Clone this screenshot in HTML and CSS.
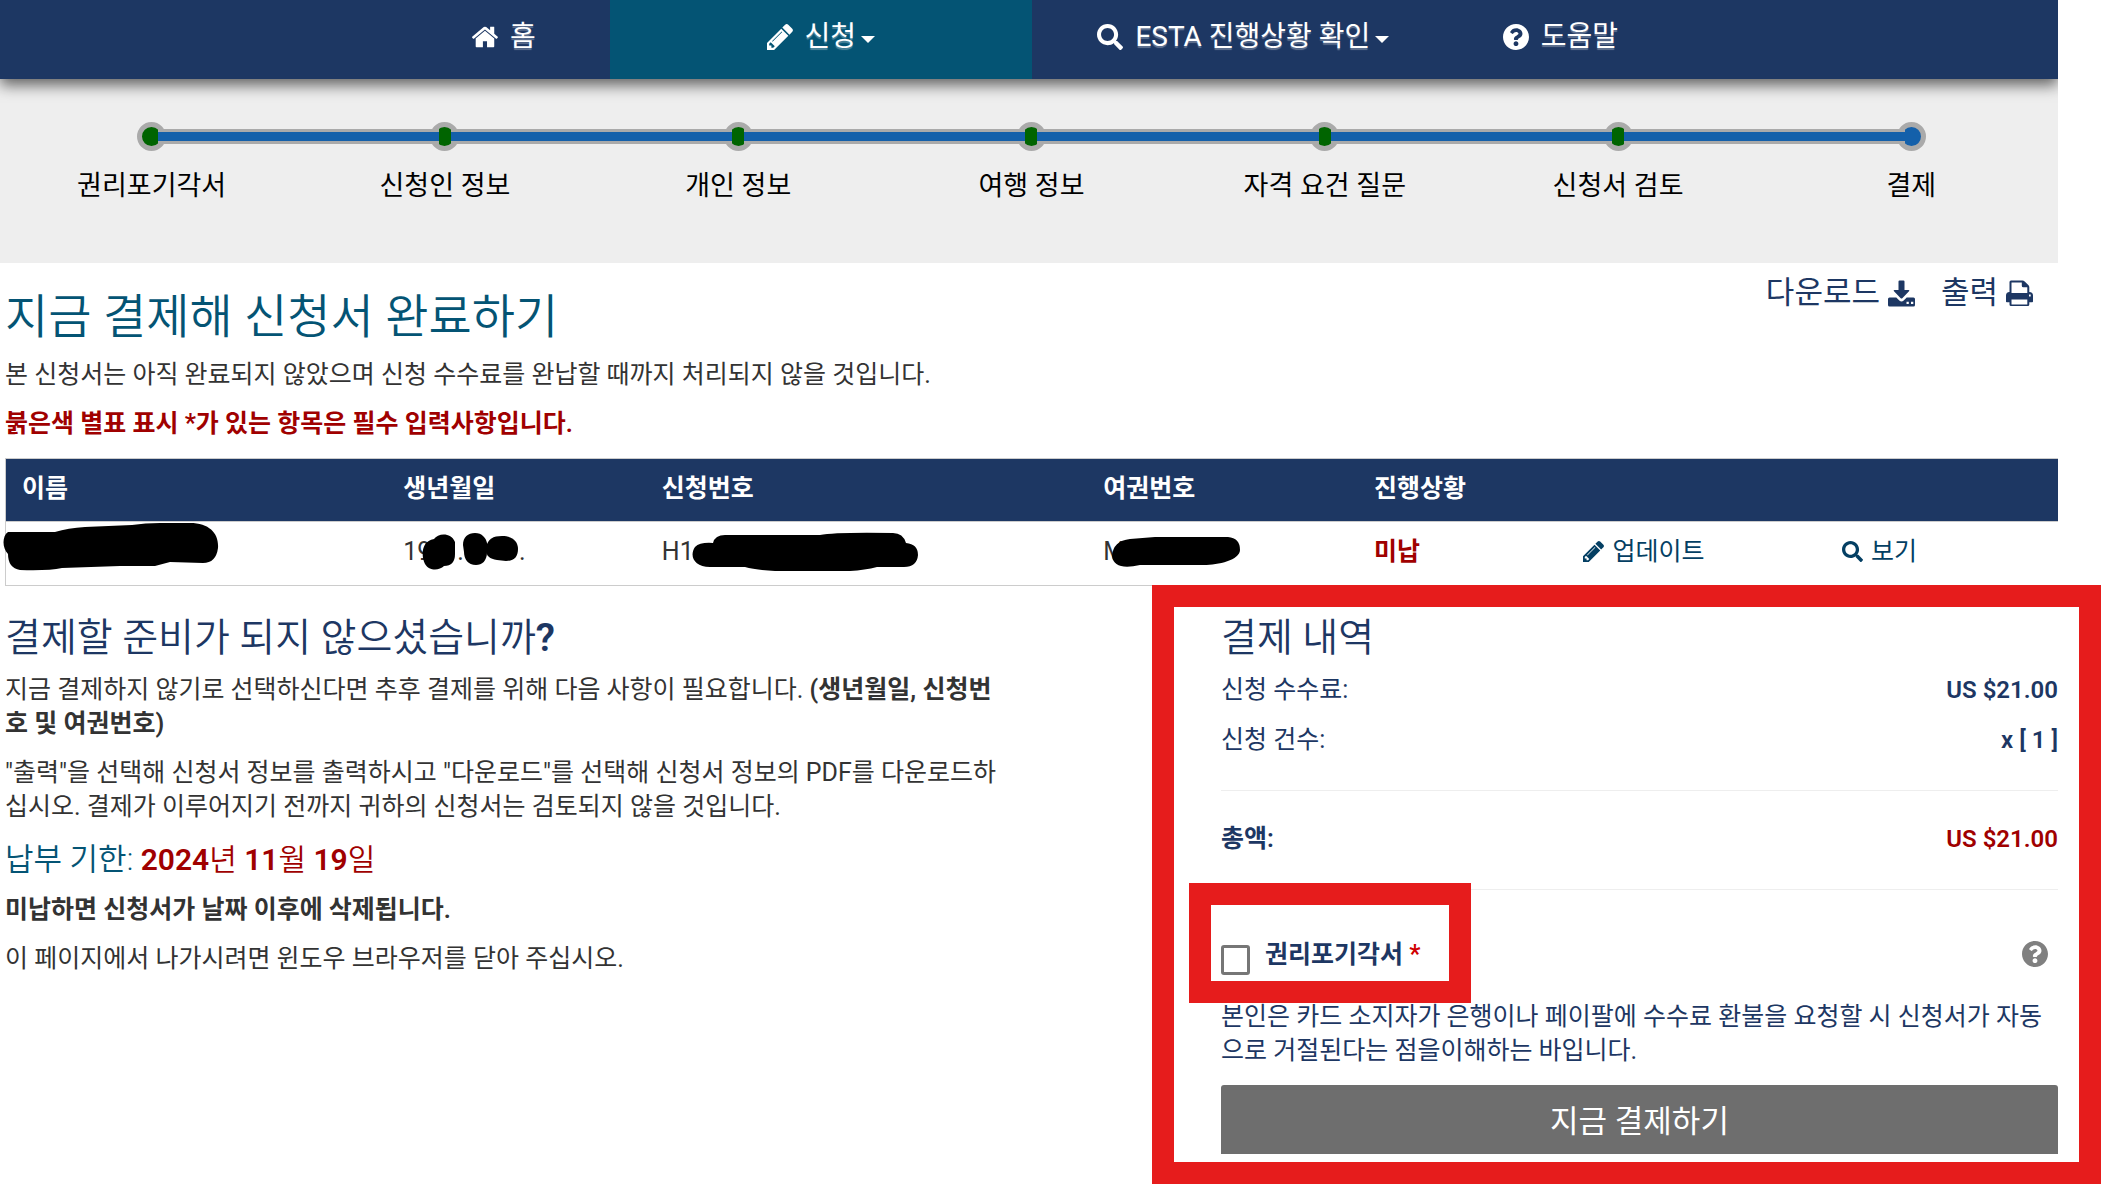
FILE: index.html
```html
<!DOCTYPE html>
<html lang="ko">
<head>
<meta charset="utf-8">
<title>ESTA - 결제</title>
<link rel="stylesheet" href="styles.css">
</head>
<body>
<svg class="sprite" aria-hidden="true">
  <symbol id="i-home" viewBox="90 250 1616 1290"><path d="M1472 992v480q0 26-19 45t-45 19h-384v-384h-256v384h-384q-26 0-45-19t-19-45v-480q0-1 .5-3t.5-3l575-474 575 474q1 2 1 6zm223-69l-62 74q-8 9-21 11h-3q-13 0-21-7l-692-577-692 577q-12 8-24 7-13-2-21-11l-62-74q-8-10-7-23.5t11-21.5l719-599q32-26 76-26t76 26l244 204v-195q0-14 9-23t23-9h192q14 0 23 9t9 23v408l219 182q10 8 11 21.5t-7 23.5z"/></symbol>
  <symbol id="i-pencil" viewBox="128 144 1520 1520"><path d="M491 1536l91-91-235-235-91 91v107h128v128h107zm523-928q0-22-22-22-10 0-17 7l-542 542q-7 7-7 17 0 22 22 22 10 0 17-7l542-542q7-7 7-17zm-54-192l416 416-832 832h-416v-416zm683 96q0 53-37 90l-166 166-416-416 166-165q36-38 90-38 53 0 91 38l235 234q37 39 37 91z"/></symbol>
  <symbol id="i-search" viewBox="0 0 512 512"><path d="M505 442.700L405.300 343c-4.500-4.500-10.600-7-17-7H372c27.600-35.300 44-79.700 44-128C416 93.100 322.900 0 208 0S0 93.100 0 208s93.100 208 208 208c48.300 0 92.700-16.400 128-44v16.300c0 6.400 2.500 12.500 7 17l99.700 99.700c9.400 9.400 24.600 9.400 33.900 0l28.300-28.300c9.400-9.400 9.400-24.600.1-34zM208 336c-70.700 0-128-57.200-128-128 0-70.700 57.200-128 128-128 70.700 0 128 57.200 128 128 0 70.700-57.200 128-128 128z"/></symbol>
  <symbol id="i-help" viewBox="8 8 496 496"><path d="M504 256c0 136.997-111.043 248-248 248S8 392.997 8 256C8 119.083 119.043 8 256 8s248 111.083 248 248zM262.655 90c-54.497 0-89.255 22.957-116.549 63.758-3.536 5.286-2.353 12.415 2.715 16.258l34.699 26.310c5.205 3.947 12.621 3.008 16.665-2.122 17.864-22.658 30.113-35.797 57.303-35.797 20.429 0 45.698 13.148 45.698 32.958 0 14.976-12.363 22.667-32.534 33.976C247.128 238.528 216 254.941 216 296v4c0 6.627 5.373 12 12 12h56c6.627 0 12-5.373 12-12v-1.333c0-28.462 83.186-29.647 83.186-106.667 0-58.002-60.165-102-116.531-102zM256 338c-25.365 0-46 20.635-46 46 0 25.364 20.635 46 46 46s46-20.636 46-46c0-25.365-20.635-46-46-46z"/></symbol>
  <symbol id="i-download" viewBox="0 0 27 26"><path d="M10.500 1q0-1 1-1h4q1 0 1 1v8.500h4q1.500 0 .5 1.200l-6.700 7q-.8.800-1.600 0l-6.700-7q-1-1.200.5-1.200h4z"/><path fill-rule="evenodd" d="M1.500 17h6.800l3 3q2.200 1.800 4.400 0l3-3h6.800q1.500 0 1.500 1.500v6q0 1.500-1.500 1.500h-24Q0 26 0 24.500v-6Q0 17 1.500 17zM18.500 21.200v2.300h2.300v-2.300zM23 21.200v2.300h2.300v-2.300z"/></symbol>
  <symbol id="i-print" viewBox="0 0 27 26"><path fill-rule="evenodd" d="M3.500 11.500V1.500Q3.500 0 5 0h11.500q1.200 0 2.200 1l3.600 3.600q1 1 1 2.200V11.500q3.700 0 3.700 3.500v6q0 .8-.8.800h-2.900v2.200q0 1.500-1.500 1.500H5q-1.500 0-1.500-1.500v-2.200H.8q-.8 0-.8-.8v-6Q0 11.500 3.500 11.500zM5.500 2V12.500h15.800V6.800h-4q-1.500 0-1.500-1.500V2zM5.500 19v5h15.800v-5zM23 14v2h1.700v-2z"/></symbol>
</svg>

<nav class="topnav">
  <div class="topnav-items">
    <a href="#"><svg class="icon"><use href="#i-home"/></svg>홈</a>
    <a href="#" class="active"><svg class="icon"><use href="#i-pencil"/></svg>신청<span class="caret"></span></a>
    <a href="#"><svg class="icon"><use href="#i-search"/></svg>ESTA 진행상황 확인<span class="caret"></span></a>
    <a href="#"><svg class="icon"><use href="#i-help"/></svg>도움말</a>
  </div>
</nav>

<ol class="steps">
  <li><span class="dot"></span>권리포기각서</li>
  <li><span class="dot"></span>신청인 정보</li>
  <li><span class="dot"></span>개인 정보</li>
  <li><span class="dot"></span>여행 정보</li>
  <li><span class="dot"></span>자격 요건 질문</li>
  <li><span class="dot"></span>신청서 검토</li>
  <li class="current"><span class="dot"></span>결제</li>
</ol>

<main>
  <header class="page-head">
    <h1>지금 결제해 신청서 완료하기</h1>
    <div class="tools">
      <a href="#">다운로드<svg class="icon"><use href="#i-download"/></svg></a>
      <a href="#">출력<svg class="icon"><use href="#i-print"/></svg></a>
    </div>
  </header>
  <p>본 신청서는 아직 완료되지 않았으며 신청 수수료를 완납할 때까지 처리되지 않을 것입니다.</p>
  <p class="required-note">붉은색 별표 표시 *가 있는 항목은 필수 입력사항입니다.</p>

  <table>
    <colgroup><col class="c-name"><col class="c-birth"><col class="c-app"><col class="c-pass"><col class="c-status"><col class="c-update"><col></colgroup>
    <thead>
      <tr><th>이름</th><th>생년월일</th><th>신청번호</th><th>여권번호</th><th>진행상황</th><th></th><th></th></tr>
    </thead>
    <tbody>
      <tr>
        <td><span class="masked"><svg class="mask mask-name" viewBox="3 521 216 48"><path d="M8 530H55Q68 526 85 525L132 523Q145 521 160 521H190C210 521 219 532 218 546Q216 561 203 561L170 560 155 564 120 564 62 566Q48 569 20 568 8 566 8 552C2 546 2 534 8 530Z"/></svg></span></td>
        <td><span class="masked">19<svg class="mask mask-year" viewBox="422 533 35 36"><path d="M434 538C438 532 451 531 455 541V553Q455 565 444 565C439 570 429 570 425 563 421 555 421 540 434 538Z"/></svg>.<svg class="mask mask-day" viewBox="462 533 56 33"><path d="M462 545C462 537 467 533 474 533 481 533 485 538 486 543V552C486 561 481 565 475 565 467 565 463 559 463 552Z"/><path d="M485 547C487 539 492 536 501 536 511 536 517 541 517 549 517 557 513 561 505 561L496 560C488 559 484 555 485 547Z"/></svg>.</span></td>
        <td><span class="masked">H1<svg class="mask mask-app" viewBox="692 532 227 40"><path d="M695 547Q700 542 713 543 715 535 725 535H820Q835 532 893 533 903 533 906 543 918 544 918 555 917 567 904 567H877Q865 570 850 571H775Q755 570 745 567H710C694 567 689 556 695 547Z"/></svg></span></td>
        <td><span class="masked">M<svg class="mask mask-pass" viewBox="1112 537 128 30"><path d="M1112 556Q1113 541 1130 539L1155 537H1228Q1240 538 1240 550C1240 560 1218 565 1204 565H1140Q1114 571 1112 556Z"/></svg></span></td>
        <td class="unpaid">미납</td>
        <td><a href="#"><svg class="icon"><use href="#i-pencil"/></svg>업데이트</a></td>
        <td><a href="#"><svg class="icon"><use href="#i-search"/></svg>보기</a></td>
      </tr>
    </tbody>
  </table>

  <div class="columns">
    <section class="notready">
      <h2>결제할 준비가 되지 않으셨습니까<b>?</b></h2>
      <p>지금 결제하지 않기로 선택하신다면 추후 결제를 위해 다음 사항이 필요합니다. <b>(생년월일, 신청번호 및 여권번호)</b></p>
      <p>"출력"을 선택해 신청서 정보를 출력하시고 "다운로드"를 선택해 신청서 정보의 PDF를 다운로드하십시오. 결제가 이루어지기 전까지 귀하의 신청서는 검토되지 않을 것입니다.</p>
      <h3>납부 기한: <span class="date"><b>2024</b>년 <b>11</b>월 <b>19</b>일</span></h3>
      <p><b>미납하면 신청서가 날짜 이후에 삭제됩니다.</b></p>
      <p>이 페이지에서 나가시려면 윈도우 브라우저를 닫아 주십시오.</p>
    </section>

    <section class="payment">
      <h2>결제 내역</h2>
      <div class="line"><span>신청 수수료:</span><b>US $21.00</b></div>
      <div class="line"><span>신청 건수:</span><b>x [ 1 ]</b></div>
      <hr>
      <div class="line total"><strong>총액:</strong><b class="due">US $21.00</b></div>
      <hr>
      <div class="waiver">
        <input type="checkbox" id="waiver">
        <label for="waiver">권리포기각서 <span class="star">*</span></label>
        <svg class="icon help" role="img" aria-label="도움말"><use href="#i-help"/></svg>
        <span class="marker"></span>
      </div>
      <p>본인은 카드 소지자가 은행이나 페이팔에 수수료 환불을 요청할 시 신청서가 자동으로 거절된다는 점을이해하는 바입니다.</p>
      <button type="button">지금 결제하기</button>
      <span class="marker"></span>
    </section>
  </div>
</main>
</body>
</html>
```
FILE: styles.css
```css
* { box-sizing: border-box; }

body {
  margin: 0;
  padding-right: 43px;
  background: #fff;
  color: #333;
  font: 25px/34px Roboto, "Noto Sans CJK KR", sans-serif;
}

h1, h2, h3, p { margin: 0; font-weight: 400; }
h1, h2, h3 { font-weight: 350; }
a { color: inherit; text-decoration: none; }
b, strong { font-weight: 600; }
.sprite { position: absolute; width: 0; height: 0; }
.icon { width: 24px; height: 24px; fill: currentColor; flex: none; }

/* top navigation */
.topnav {
  position: relative;
  background: #1d3763;
  color: #fff;
  box-shadow: 0 6px 14px rgba(0, 0, 0, .6);
  clip-path: inset(0 0 -24px 0);
}
.topnav-items {
  display: grid;
  grid-template-columns: 1fr 2fr 2fr 1fr;
  width: 61.600%;
  margin-left: 19.350%;
}
.topnav a {
  display: flex;
  align-items: center;
  justify-content: center;
  height: 79px;
  padding-bottom: 6px;
  font-size: 28px;
  white-space: nowrap;
  text-shadow: 0 2px 1px rgba(255, 255, 255, .3);
}
.topnav a.active { background: #045474; }
.topnav .icon { width: 26px; height: 26px; margin-right: 12px; }
.caret {
  margin: 6px 0 0 5px;
  border: 7px solid transparent;
  border-top-color: #fff;
  border-bottom: 0;
}

/* progress steps */
.steps {
  display: flex;
  margin: 0;
  padding: 43px 0 57px 5px;
  list-style: none;
  background: #eee;
  color: #000;
  font-size: 27px;
  line-height: 40px;
}
.steps li {
  position: relative;
  flex: 1 1 0;
  display: flex;
  flex-direction: column;
  align-items: center;
  gap: 15px;
}
.dot {
  width: 29px;
  height: 29px;
  border: 5px solid #aaa;
  border-radius: 50%;
  background: #006400;
}
.current .dot { background: #1460aa; }
.steps li:not(.current)::after {
  content: "";
  position: absolute;
  z-index: 1;
  top: 7px;
  left: calc(50% + 6px);
  width: calc(100% - 12px);
  height: 9px;
  border: solid #aaa;
  border-width: 3px 0;
  background: #1460aa;
}

/* page content */
main { padding: 0 0 30px 5px; }
.page-head {
  display: flex;
  justify-content: space-between;
  padding: 7px 25px 12px 0;
}
h1 {
  padding-top: 18px;
  color: #045474;
  font-size: 47px;
  line-height: 58px;
}
.tools {
  display: flex;
  gap: 26px;
  height: 46px;
  color: #1d3763;
  font-size: 31px;
}
.tools a { display: flex; align-items: center; gap: 8px; }
.tools .icon { width: 27px; height: 27px; }
p { margin-bottom: 15px; }
.required-note { margin-bottom: 17px; color: #a00000; font-weight: 600; }

table {
  width: 100%;
  border-collapse: collapse;
  table-layout: fixed;
  border: 1px solid #ccc;
  border-right: 0;
}
.c-name { width: 18.600%; }
.c-birth { width: 12.600%; }
.c-app { width: 21.500%; }
.c-pass { width: 13.200%; }
.c-status { width: 10.200%; }
.c-update { width: 12.600%; }
th, td { padding: 0 0 4px 16px; text-align: left; }
th { height: 63px; padding-bottom: 2px; background: #1d3763; color: #fff; font-weight: 600; }
td { height: 64px; }
thead tr { border-bottom: 1px solid #ccc; }
.unpaid { color: #a00000; font-weight: 600; }
td a { display: flex; align-items: center; gap: 8px; color: #043f63; }
td .icon { width: 21px; height: 21px; }
.masked { display: flex; align-items: center; height: 48px; }
.mask { flex: none; display: block; fill: #000; }
.mask-name { width: 216px; height: 48px; margin: -10px 0 0 -19px; }
.mask-year { width: 35px; height: 36px; margin-left: -9px; }
.mask-day { width: 56px; height: 33px; margin: -4px 0 0 -1px; }
.mask-app { width: 227px; height: 40px; margin-left: -2px; }
.mask-pass { width: 128px; height: 30px; margin-left: -13px; }

.columns {
  display: grid;
  grid-template-columns: 1003fr 837fr;
  column-gap: 213px;
}
h2 {
  padding: 28px 0 11px;
  color: #1d3763;
  font-size: 39px;
  line-height: 48px;
}
h3 {
  margin-bottom: 14px;
  padding-top: 1px;
  color: #045474;
  font-size: 31px;
  line-height: 39px;
}
.date { color: #a00000; font-size: 30px; }
.due { color: #a00000; }

.payment { position: relative; color: #1d3763; }
.line {
  display: flex;
  justify-content: space-between;
  margin-bottom: 16px;
}
.line b { font-size: 24px; }
hr { margin: 33px 0 31px; border: 0; border-top: 1px solid #eee; }
.total { margin: 0; }
.waiver {
  position: relative;
  display: flex;
  align-items: flex-start;
  padding: 17px 10px 25px 0;
}
.waiver input {
  appearance: none;
  width: 29px;
  height: 30px;
  margin: 7px 15px 0 0;
  border: 3px solid #767676;
  border-radius: 3px;
  background: #fff;
}
.waiver label { font-weight: 600; }
.star { color: #d00000; }
.help { width: 26px; height: 26px; margin: 3px 0 0 auto; color: #808080; }
.payment p { margin-bottom: 17px; }
button {
  display: block;
  width: 100%;
  height: 69px;
  padding: 4px 0 0;
  border: 0;
  border-radius: 3px 3px 0 0;
  background: #6e6e6e;
  color: #fff;
  font: inherit;
  font-size: 31px;
}

/* red highlight frames drawn over the panel */
.marker {
  position: absolute;
  border: 22px solid #e61c1c;
  pointer-events: none;
}
.payment > .marker { top: -1px; right: -43px; bottom: -30px; left: -69px; }
.waiver .marker { top: -38px; bottom: -3px; left: -32px; width: 282px; }
```
